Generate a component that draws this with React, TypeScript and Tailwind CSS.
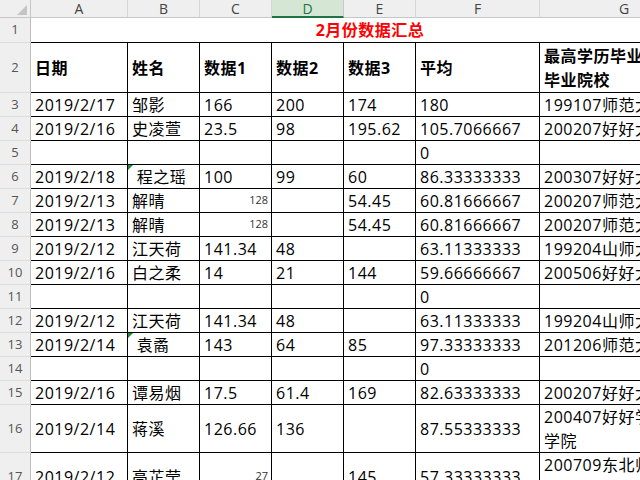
import React from 'react';

type Row = {
  n: number;
  h?: string;
  cells: string[];
  small?: boolean;
  flag?: boolean;
};

const COL_W = ['w-[97px]', 'w-[72px]', 'w-[72px]', 'w-[72px]', 'w-[72px]', 'w-[124px]', 'w-[169px]'];
const LETTERS = ['A', 'B', 'C', 'D', 'E', 'F', 'G'];
const HEADERS = ['日期', '姓名', '数据1', '数据2', '数据3', '平均', '最高学历毕业时间及毕业院校'];

const ROWS: Row[] = [
  { n: 3, cells: ['2019/2/17', '邹影', '166', '200', '174', '180', '199107师范大学'] },
  { n: 4, cells: ['2019/2/16', '史凌萱', '23.5', '98', '195.62', '105.7066667', '200207好好大学'] },
  { n: 5, cells: ['', '', '', '', '', '0', ''] },
  { n: 6, flag: true, cells: ['2019/2/18', '\u00a0程之瑶', '100', '99', '60', '86.33333333', '200307好好大学'] },
  { n: 7, small: true, cells: ['2019/2/13', '解晴', '128', '', '54.45', '60.81666667', '200207师范大学'] },
  { n: 8, small: true, cells: ['2019/2/13', '解晴', '128', '', '54.45', '60.81666667', '200207师范大学'] },
  { n: 9, cells: ['2019/2/12', '江天荷', '141.34', '48', '', '63.11333333', '199204山师大'] },
  { n: 10, cells: ['2019/2/16', '白之柔', '14', '21', '144', '59.66666667', '200506好好大学'] },
  { n: 11, cells: ['', '', '', '', '', '0', ''] },
  { n: 12, cells: ['2019/2/12', '江天荷', '141.34', '48', '', '63.11333333', '199204山师大'] },
  { n: 13, flag: true, cells: ['2019/2/14', '\u00a0袁矞', '143', '64', '85', '97.33333333', '201206师范大学'] },
  { n: 14, cells: ['', '', '', '', '', '0', ''] },
  { n: 15, cells: ['2019/2/16', '谭易烟', '17.5', '61.4', '169', '82.63333333', '200207好好大学'] },
  { n: 16, h: 'h-[48px]', cells: ['2019/2/14', '蒋溪', '126.66', '136', '', '87.55333333', '200407好好学习大学学院'] },
  { n: 17, h: 'h-[48px]', small: true, cells: ['2019/2/12', '高芷莹', '27', '', '145', '57.33333333', '200709东北师范大学教育学院'] },
];

function RowNum({ n, h }: { n: number; h: string }) {
  return (
    <div className={`${h} w-[31px] shrink-0 flex items-center justify-center bg-[#efefef] border-r border-b border-r-[#bdbdbd] border-b-[#dcdcdc] text-[13px] text-[#555]`}>
      {n}
    </div>
  );
}

export default function App() {
  return (
    <div className="w-[640px] h-[480px] overflow-hidden bg-white text-black font-['Open_Sans','Noto_Sans_CJK_SC',sans-serif]">
      <div className="w-[740px]">
        {/* column letters */}
        <div className="flex h-[18px]">
          <div className="relative w-[31px] shrink-0 bg-[#efefef] border-r border-b border-[#c6c6c6]">
            <svg className="absolute left-0 top-0" width="31" height="18">
              <polygon points="27,5 27,15 17,15" fill="#c4c4c4" />
            </svg>
          </div>
          {LETTERS.map((l, i) =>
            l === 'D' ? (
              <div
                key={l}
                className={`${COL_W[i]} shrink-0 flex items-center justify-center bg-[#d6e6d4] border-r border-[#c8c8c8] border-b-2 border-b-[#217346] text-[14px] text-[#217346]`}
              >
                {l}
              </div>
            ) : (
              <div
                key={l}
                className={`${COL_W[i]} shrink-0 flex items-center justify-center bg-[#efefef] border-r border-b border-r-[#d6d6d6] border-b-[#c6c6c6] text-[14px] text-[#444]`}
              >
                {l}
              </div>
            )
          )}
        </div>

        {/* row 1: title */}
        <div className="flex h-[25px]">
          <RowNum n={1} h="h-[25px]" />
          <div className="w-[678px] shrink-0 flex items-center justify-center border-b border-black text-[16px] font-bold text-[#ff0000] tracking-[0.5px]">
            2月份数据汇总
          </div>
        </div>

        {/* row 2: headers */}
        <div className="flex h-[50px]">
          <RowNum n={2} h="h-[50px]" />
          {HEADERS.map((t, i) => (
            <div
              key={t}
              className={`${COL_W[i]} shrink-0 flex items-center overflow-hidden pl-1 border-r border-b border-black text-[16px] font-bold leading-[24px] tracking-[0.5px]`}
            >
              <span className="break-all">{t}</span>
            </div>
          ))}
        </div>

        {ROWS.map((r) => {
          const h = r.h ?? 'h-[24px]';
          return (
            <div key={r.n} className={`flex ${h}`}>
              <RowNum n={r.n} h={h} />
              {r.cells.map((t, i) => {
                if (i === 2 && r.small) {
                  return (
                    <div
                      key={i}
                      className={`${COL_W[i]} shrink-0 flex items-center justify-end pr-[3px] border-r border-b border-black text-[11px] text-[#333]`}
                    >
                      {t}
                    </div>
                  );
                }
                return (
                  <div
                    key={i}
                    className={`${COL_W[i]} relative shrink-0 flex items-center overflow-hidden pl-1 border-r border-b border-black text-[16px] leading-[24px] tracking-[0.5px]`}
                  >
                    {i === 1 && r.flag && (
                      <div className="absolute left-0 top-0 w-0 h-0 border-t-[5px] border-r-[5px] border-t-[#1f8a3c] border-r-transparent" />
                    )}
                    <span className="break-all whitespace-pre-wrap">{t}</span>
                  </div>
                );
              })}
            </div>
          );
        })}
      </div>
    </div>
  );
}
